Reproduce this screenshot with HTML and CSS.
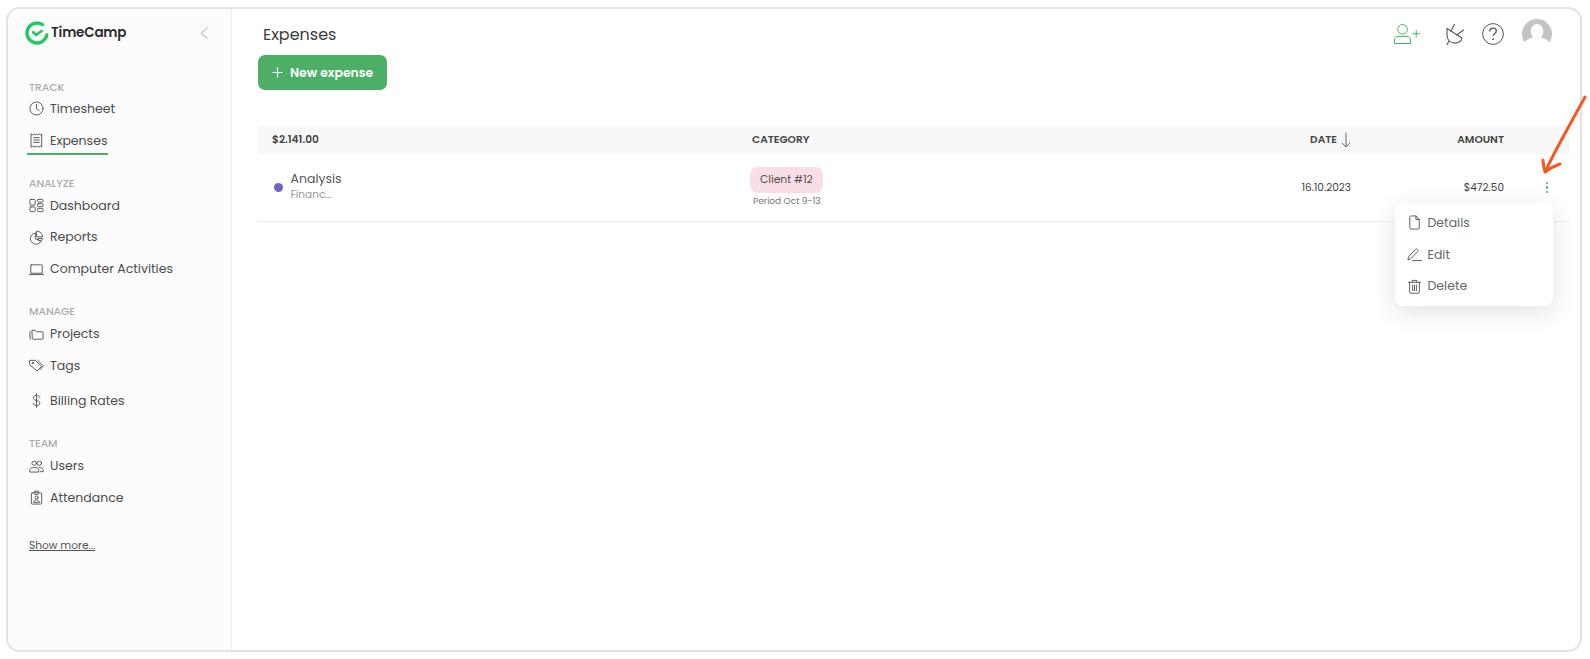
FILE: index.html
```html
<!DOCTYPE html>
<html lang="en">
<head>
<meta charset="utf-8">
<title>Expenses</title>
<link rel="stylesheet" href="styles.css">
</head>
<body>
<div class="frame">
  <aside class="sidebar">
    <div class="brand">
      <svg class="logo" viewBox="0 0 24 24" width="24" height="24" fill="none" stroke="#25c664" stroke-linecap="round" stroke-linejoin="round"><path d="M17.5 3.6A10 10 0 1 0 21.800 14" stroke-width="3.4"/><path d="M8.200 11.300l3.100 2.700 5.200-4" stroke-width="2.8"/></svg>
      <span class="brand-name">TimeCamp</span>
      <svg class="collapse" viewBox="0 0 10 16" width="9" height="14" fill="none" stroke="#999" stroke-width="1"><path d="M8.5 1.5L1.5 8l7 6.5"/></svg>
    </div>

    <div class="group group-track">
      <div class="group-label">TRACK</div>
      <a class="nav-item"><svg class="ico" viewBox="0 0 16 16"><circle cx="8" cy="8" r="7"/><path d="M8 3.5V8.300l2.800 1.800"/></svg><span>Timesheet</span></a>
      <a class="nav-item is-active"><svg class="ico" viewBox="0 0 16 16"><path d="M2.5 1l1.375 1L5.250 1l1.375 1L8 1l1.375 1L10.750 1l1.375 1L13.500 1v14l-1.375-1-1.375 1-1.375-1L8 15l-1.375-1-1.375 1-1.375-1L2.500 15z"/><path d="M5 5h6M5 7.5h6M5 10h6"/></svg><span>Expenses</span></a>
    </div>

    <div class="group group-analyze">
      <div class="group-label">ANALYZE</div>
      <a class="nav-item"><svg class="ico" viewBox="0 0 16 16"><rect x="1" y="1.5" width="5.6" height="6" rx="1"/><rect x="1" y="9.5" width="5.6" height="5" rx="1"/><rect x="9" y="1.5" width="6" height="3" rx="1"/><rect x="9" y="6.2" width="6" height="3" rx="1"/><rect x="9" y="11" width="6" height="3.5" rx="1"/></svg><span>Dashboard</span></a>
      <a class="nav-item"><svg class="ico" viewBox="0 0 16 16"><path d="M6.6 3.2a6 6 0 1 0 6.2 8.600L7 9.5z"/><path d="M8.5 1.2a6 6 0 0 1 6 6h-6z"/><path d="M9.5 9h5l-2 3.4z"/></svg><span>Reports</span></a>
      <a class="nav-item"><svg class="ico" viewBox="0 0 16 16"><path d="M2.5 3h11a.6.6 0 0 1 .6.6V12H1.9V3.6a.6.6 0 0 1 .6-.6z"/><path d="M.5 13.400h15"/></svg><span>Computer Activities</span></a>
    </div>

    <div class="group group-manage">
      <div class="group-label">MANAGE</div>
      <a class="nav-item"><svg class="ico" viewBox="0 0 16 16"><path d="M3.5 3.5h3.200l1.400 1.500H14a1 1 0 0 1 1 1v6a1 1 0 0 1-1 1H4.500a1 1 0 0 1-1-1z"/><path d="M1 5v7a1.500 1.500 0 0 0 1 1.200"/></svg><span>Projects</span></a>
      <a class="nav-item"><svg class="ico" viewBox="0 0 16 16"><path d="M1 2.500h5.600l6.800 6.500-4.800 4.800L1 7.500z"/><path d="M9.200 2.500l6 5.800-3.200 3.900"/><circle cx="4" cy="5.300" r=".8"/></svg><span>Tags</span></a>
      <a class="nav-item nav-billing"><svg class="ico" viewBox="0 0 16 16"><path d="M11.500 4.600C11.300 3.300 9.800 2.600 8 2.600S4.600 3.500 4.600 5.200 6.200 7.400 8 8s3.600 1 3.600 2.900S9.900 13.400 8 13.400s-3.400-.8-3.600-2.200"/><path d="M8 .6v14.800"/></svg><span>Billing Rates</span></a>
    </div>

    <div class="group group-team">
      <div class="group-label">TEAM</div>
      <a class="nav-item"><svg class="ico" viewBox="0 0 16 16"><ellipse cx="5.500" cy="4.500" rx="2.400" ry="2.200"/><ellipse cx="11" cy="4.500" rx="2.400" ry="2.200"/><path d="M.8 13.500v-1.500c0-1.700 1.300-2.800 3-2.800h3.600c1.700 0 3 1.100 3 2.800v1.500z"/><path d="M11 9.200h1c1.700 0 3.200 1.100 3.200 2.800v1.500h-3"/></svg><span>Users</span></a>
      <a class="nav-item"><svg class="ico" viewBox="0 0 16 16"><rect x="2.500" y="3" width="11" height="12" rx="1"/><path d="M6 3V1.200h4V3M6 4.600h4"/><circle cx="8" cy="8" r="1.600"/><path d="M5 12.800c.3-1.600 1.400-2.200 3-2.200s2.700.6 3 2.200z"/></svg><span>Attendance</span></a>
    </div>

    <a class="show-more">Show more...</a>
  </aside>

  <main class="content">
    <header class="topbar">
      <h1 class="title">Expenses</h1>
      <div class="top-icons">
        <svg class="ico-user" viewBox="0 0 26 20" width="26" height="20" fill="none" stroke="#4caf65" stroke-width="1"><circle cx="8.500" cy="5.300" r="4.800"/><path d="M.5 19.500v-3.500c0-2.200 1.500-3.600 3.600-3.600h8.800c2.100 0 3.600 1.400 3.600 3.600v3.500z"/><path d="M18.500 9.700H26M22.200 6v7.500"/></svg>
        <svg class="ico-plug" viewBox="0 0 18 21" width="18" height="21" fill="none" stroke="#555" stroke-width="1.1" stroke-linecap="round" stroke-linejoin="round"><path d="M1 4.500L16 14C15.500 17.500 11.500 19.500 8 19 4 18.500 1 15.500 1 11z"/><path d="M8.300.5L5 7.200M17.500 6L11 10.800M3 17L1 20.500"/></svg>
        <svg class="ico-help" viewBox="0 0 22 22" width="22" height="22" fill="none" stroke="#555" stroke-width="1"><circle cx="11" cy="11" r="10.400"/><path d="M7.800 8.400c0-2 1.500-3.200 3.300-3.200s3.200 1.200 3.200 2.900c0 2.600-3.200 2.500-3.200 5" stroke-width="1.300"/><circle cx="11.100" cy="16.200" r=".9" fill="#555" stroke="none"/></svg>
        <div class="avatar"><svg viewBox="0 0 30 30" width="30" height="30"><circle cx="15" cy="15" r="15" fill="#c4c4c4"/><ellipse cx="15" cy="12.500" rx="6.300" ry="7.500" fill="#fff"/><path d="M2 24c3-4.500 7-4.500 10-6h6c3 1.500 7 1.500 10 6l-2 6H4z" fill="#fff"/></svg></div>
      </div>
    </header>

    <button class="btn-new"><svg viewBox="0 0 12 12" width="11" height="11" fill="none" stroke="#fff" stroke-width="1.3"><path d="M6 .5v11M.5 6h11"/></svg><span>New expense</span></button>

    <div class="table">
      <div class="row row-head">
        <div class="cell-name">$2.141.00</div>
        <div class="cell-cat">CATEGORY</div>
        <div class="cell-date">DATE<svg viewBox="0 0 10 16" width="10" height="16" fill="none" stroke="#666" stroke-width="1"><path d="M5 .5v14.500M.8 10.800L5 15l4.200-4.200"/></svg></div>
        <div class="cell-amount">AMOUNT</div>
        <div class="cell-menu"></div>
      </div>
      <div class="row row-body">
        <div class="cell-name name-wrap">
          <span class="dot"></span>
          <div class="name-text">
            <div class="name-main">Analysis</div>
            <div class="name-sub">Financ...</div>
          </div>
        </div>
        <div class="cell-cat cat-wrap">
          <span class="tag">Client #12</span>
          <span class="period">Period Oct 9-13</span>
        </div>
        <div class="cell-date body-val">16.10.2023</div>
        <div class="cell-amount body-val">$472.50</div>
        <div class="cell-menu"><span class="kebab"><i></i><i></i><i></i></span></div>
      </div>
    </div>

    <div class="menu">
      <a class="menu-item"><svg class="ico" viewBox="0 0 16 16"><path d="M3 2a1 1 0 0 1 1-1h5.500L13 4.800V14a1 1 0 0 1-1 1H4a1 1 0 0 1-1-1z"/><path d="M9.500 1v3.800H13"/></svg><span>Details</span></a>
      <a class="menu-item"><svg class="ico" viewBox="0 0 16 16"><path d="M1 13.500L2 10l7-7.500a1.700 1.700 0 0 1 2.400 2.400L4.300 12.300z"/><path d="M6 14.500h9.500"/></svg><span>Edit</span></a>
      <a class="menu-item"><svg class="ico" viewBox="0 0 16 16"><path d="M1.500 3.500h13M5.500 3.500V1.500h5v2"/><path d="M2.800 3.500v10.700a1 1 0 0 0 1 1h8.400a1 1 0 0 0 1-1V3.500"/><path d="M6 6.500v6M8 6.500v6M10 6.500v6"/></svg><span>Delete</span></a>
    </div>
  </main>
  <svg class="arrow" viewBox="0 0 48 80" width="48" height="80" fill="none" stroke="#f25a23" stroke-width="3" stroke-linecap="round" stroke-linejoin="round"><path d="M45 2C32 26 18 50 6 75"/><path d="M3 65C3 69 4 73 5 77 9 74 14 71 20 69"/></svg>
</div>
</body>
</html>
```
FILE: styles.css
```css
* { box-sizing: border-box; }
html, body { margin: 0; height: 100%; background: #fff; }
body { font-family: "Poppins", "Inter", "Open Sans", "Liberation Sans", sans-serif; color: #444; overflow: hidden; padding: 7px 7px 7px 6px; }
.frame { position: relative; display: flex; width: 1576px; height: 645px; border: 2px solid #e2e2e2; border-radius: 14px; background: #fff; }
.sidebar { width: 224px; flex: none; background: #fcfcfc; border-right: 1px solid #eeeeee; border-radius: 12px 0 0 12px; padding: 10px 0 0 21px; display: flex; flex-direction: column; }
.brand { display: flex; align-items: center; height: 27px; margin-left: -4px; }
.logo { flex: none; }
.brand-name { margin-left: 2px; font-size: 13.5px; font-weight: 600; color: #2c2c2c; letter-spacing: -.2px; }
.collapse { margin-left: 74px; }
.group { display: flex; flex-direction: column; margin-top: 20px; }
.group-track { margin-top: 36px; }
.group-track .group-label { margin-bottom: -1px; }
.group-analyze { margin-top: 23px; }
.group-manage { margin-top: 21px; }
.group-team { margin-top: 19px; }
.group-label { font-size: 10.7px; font-weight: 500; color: #aaa; height: 12px; line-height: 12px; }
.nav-item { display: flex; align-items: center; gap: 6px; height: 31.8px; font-size: 12.5px; color: #4a4a4a; white-space: nowrap; }
.nav-billing { height: 37.5px; }
.ico { width: 15px; height: 15px; flex: none; fill: none; stroke: #555; stroke-width: 1; stroke-linejoin: round; stroke-linecap: round; }
.is-active { width: 81px; margin-left: -2px; padding-left: 2px; border-bottom: 2px solid #4caf65; height: 26px; margin-top: 4px; }
.show-more { margin-top: 24px; font-size: 10.6px; color: #555; text-decoration: underline; }
.content { position: relative; flex: 1; padding: 0 10px 0 26px; display: flex; flex-direction: column; }
.topbar { display: flex; align-items: center; justify-content: space-between; height: 46px; padding-top: 4px; }
.title { margin: 0 0 0 5px; font-size: 16px; font-weight: 400; color: #3c3c3c; }
.top-icons { display: flex; align-items: center; margin-right: 18px; }
.top-icons svg { display: block; }
.ico-user { margin-right: 1px; }
.ico-plug { margin-left: 25px; }
.ico-help { margin-left: 18px; }
.avatar { width: 30px; height: 30px; margin-left: 18px; }
.btn-new { display: flex; align-items: center; gap: 7px; width: 129px; height: 35px; padding: 0 0 0 14px; border: 0; border-radius: 7px; background: #4caf65; color: #fff; font: 600 12.4px "Poppins", "Inter", "Open Sans", "Liberation Sans", sans-serif; }
.table { margin-top: 36px; }
.row { display: flex; align-items: center; }
.row-head { height: 28px; background: #f8f8f8; font-size: 10.6px; font-weight: 600; color: #444; }
.row-body { height: 68px; border-bottom: 1px solid #eeeeee; }
.cell-name { width: 494px; flex: none; padding-left: 14px; }
.cell-cat { width: 400px; flex: none; }
.cell-date { width: 199px; flex: none; display: flex; align-items: center; justify-content: flex-end; gap: 4px; }
.cell-amount { width: 153px; flex: none; text-align: right; }
.cell-menu { flex: 1; display: flex; justify-content: flex-end; padding-right: 22px; }
.name-wrap { display: flex; align-items: center; gap: 8px; padding-left: 15.5px; }
.dot { width: 9px; height: 9px; border-radius: 50%; background: #7062c4; }
.name-text { margin-bottom: 4px; }
.name-main { font-size: 12.5px; color: #555; line-height: 17px; }
.name-sub { font-size: 10.5px; color: #999; line-height: 15px; }
.cat-wrap { display: flex; flex-direction: column; align-items: flex-start; gap: 2px; }
.tag { background: #f9dfe5; border-radius: 8px; height: 26px; line-height: 26px; padding: 0 10px; margin-left: -2px; font-size: 10.8px; color: #554a4e; }
.period { font-size: 9px; color: #777; padding-left: 1px; }
.body-val { font-size: 10.5px; color: #444; }
.kebab { display: flex; flex-direction: column; gap: 2px; }
.kebab i { display: block; width: 2.5px; height: 2.5px; border-radius: 50%; background: #4caf65; }
.menu { position: absolute; left: 1162.5px; top: 194px; width: 158.5px; height: 103px; background: #fff; border-radius: 8px; box-shadow: 0 6px 24px rgba(0,0,0,.12); padding: 4px 12px; display: flex; flex-direction: column; }
.menu-item { display: flex; align-items: center; gap: 6px; height: 32px; font-size: 12.5px; color: #666; }
.arrow { position: absolute; left: 1532px; top: 86px; }
```
